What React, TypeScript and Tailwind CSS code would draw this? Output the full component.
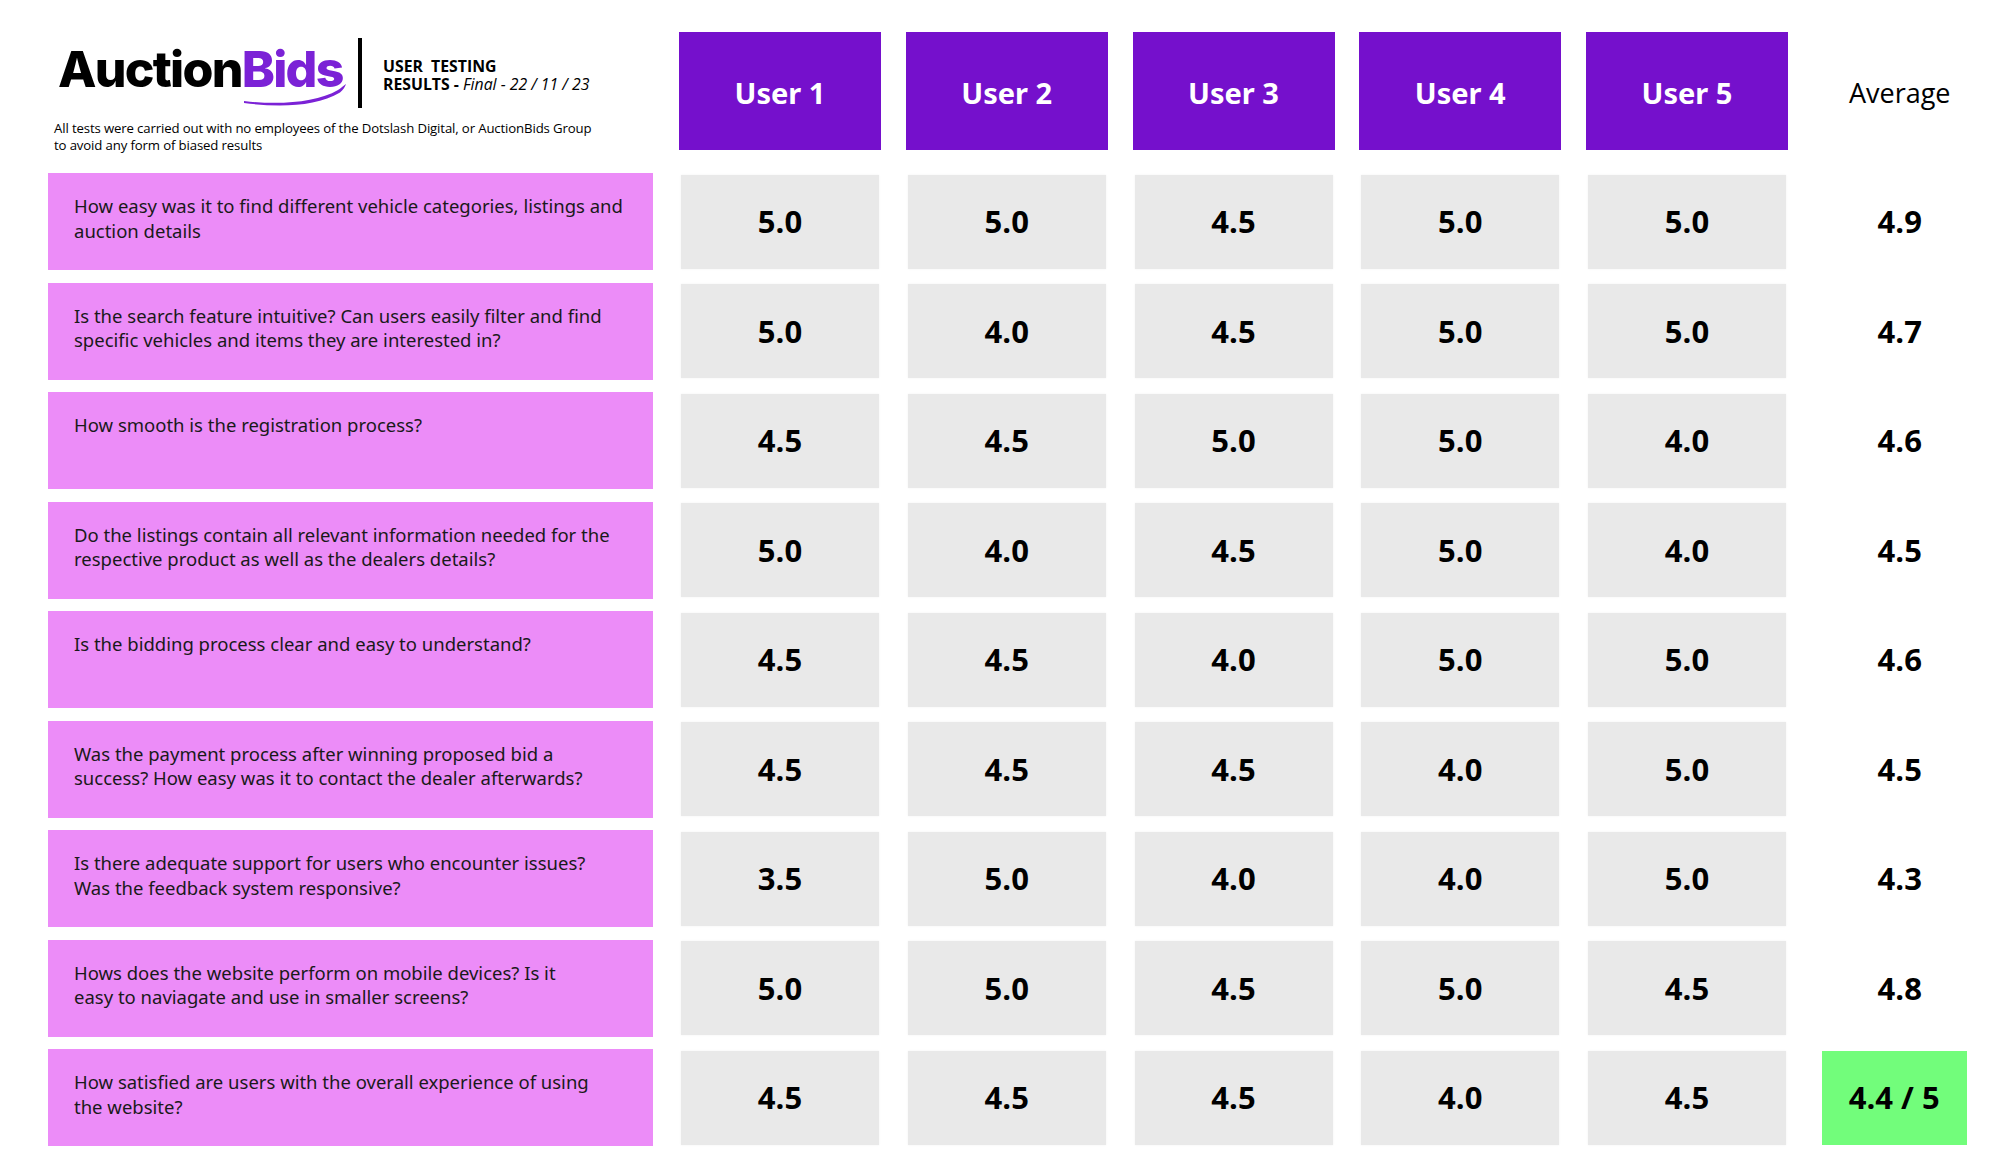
import React from "react";

type Row = { q: string[]; s: string[]; a: string; final?: boolean };

const rows: Row[] = [
  {
    q: ["How easy was it to find different vehicle categories, listings and", "auction details"],
    s: ["5.0", "5.0", "4.5", "5.0", "5.0"],
    a: "4.9",
  },
  {
    q: ["Is the search feature intuitive? Can users easily filter and find", "specific vehicles and items they are interested in?"],
    s: ["5.0", "4.0", "4.5", "5.0", "5.0"],
    a: "4.7",
  },
  {
    q: ["How smooth is the registration process?"],
    s: ["4.5", "4.5", "5.0", "5.0", "4.0"],
    a: "4.6",
  },
  {
    q: ["Do the listings contain all relevant information needed for the", "respective product as well as the dealers details?"],
    s: ["5.0", "4.0", "4.5", "5.0", "4.0"],
    a: "4.5",
  },
  {
    q: ["Is the bidding process clear and easy to understand?"],
    s: ["4.5", "4.5", "4.0", "5.0", "5.0"],
    a: "4.6",
  },
  {
    q: ["Was the payment process after winning proposed bid a", "success? How easy was it to contact the dealer afterwards?"],
    s: ["4.5", "4.5", "4.5", "4.0", "5.0"],
    a: "4.5",
  },
  {
    q: ["Is there adequate support for users who encounter issues?", "Was the feedback system responsive?"],
    s: ["3.5", "5.0", "4.0", "4.0", "5.0"],
    a: "4.3",
  },
  {
    q: ["Hows does the website perform on mobile devices? Is it", "easy to naviagate and use in smaller screens?"],
    s: ["5.0", "5.0", "4.5", "5.0", "4.5"],
    a: "4.8",
  },
  {
    q: ["How satisfied are users with the overall experience of using", "the website?"],
    s: ["4.5", "4.5", "4.5", "4.0", "4.5"],
    a: "4.4 / 5",
    final: true,
  },
];

function Logo() {
  return (
    <div className="relative ml-[10px] mt-[12px] w-[290px] shrink-0">
      <div className="font-['Inter',sans-serif] text-[50px] font-extrabold leading-none tracking-[-0.035em] text-black whitespace-nowrap">
        Auction<span className="text-[#7B22D6]">Bids</span>
      </div>
      <svg
        className="absolute left-0 top-0 overflow-visible"
        width="290"
        height="64"
        viewBox="0 0 290 64"
      >
        <path
          d="M186 57 C 220 61, 258 59, 280 46 C 283 44, 286 41.5, 288 40 C 287 43, 285 46, 282 48.5 C 258 63, 220 63.5, 186 59 Z"
          fill="#7B22D6"
        />
      </svg>
    </div>
  );
}

function HeaderBlock() {
  return (
    <div className="flex flex-col">
      <div className="flex items-start">
        <Logo />
        <div className="ml-[10px] mt-[6px] h-[70px] w-[4px] shrink-0 bg-black" />
        <div className="ml-[21px] mt-[24.5px] font-['Open_Sans',sans-serif] text-[15.8px] leading-[18.6px] text-black whitespace-nowrap">
          <div className="font-bold">USER&nbsp; TESTING</div>
          <div>
            <span className="font-bold">RESULTS - </span>
            <span className="italic">Final - 22 / 11 / 23</span>
          </div>
        </div>
      </div>
      <div className="ml-[6px] mt-[12px] font-['Open_Sans',sans-serif] text-[13.2px] leading-[16.5px] tracking-[-0.01em] text-black whitespace-nowrap">
        All tests were carried out with no employees of the Dotslash Digital, or AuctionBids Group
        <br />
        to avoid any form of biased results
      </div>
    </div>
  );
}

export default function App() {
  return (
    <div className="h-[1176px] w-[2015px] overflow-hidden bg-white pl-[48px] pt-[32px] text-black">
      <div className="grid grid-cols-[606.25px_repeat(5,202px)_174px] grid-rows-[128.5px_repeat(9,97px)] gap-x-[24.75px] gap-y-[12.5px]">
        <HeaderBlock />
        {[1, 2, 3, 4, 5].map((n) => (
          <div
            key={n}
            className="flex h-[118px] items-center justify-center bg-[#7510CC] pt-[3px] font-['Noto_Sans',sans-serif] text-[29px] font-bold font-stretch-semi-condensed text-white"
          >
            User {n}
          </div>
        ))}
        <div className="flex h-[118px] items-center justify-center pt-[5px] font-['Open_Sans',sans-serif] text-[27px] text-black">
          Average
        </div>

        {rows.map((r, i) => (
          <React.Fragment key={i}>
            <div className="h-[97px] w-[605px] bg-[#EC8CF8] pl-[26px] pt-[21px] font-['Noto_Sans',sans-serif] text-[18.5px] leading-[24.5px] font-stretch-semi-condensed text-[#1a1a1a] whitespace-nowrap">
              {r.q.map((line, j) => (
                <div key={j}>{line}</div>
              ))}
            </div>
            {r.s.map((v, j) => (
              <div
                key={j}
                className="mx-[2px] my-[1.5px] flex items-center justify-center bg-[#E9E9E9] shadow-[0_0_2px_rgba(0,0,0,0.06)] font-['Open_Sans',sans-serif] text-[31px] font-bold text-black"
              >
                {v}
              </div>
            ))}
            {r.final ? (
              <div className="my-[1.5px] ml-[9px] flex w-[145px] items-center justify-center bg-[#72FD7B] font-['Open_Sans',sans-serif] text-[31px] font-bold text-black whitespace-nowrap">
                {r.a}
              </div>
            ) : (
              <div className="flex items-center justify-center font-['Open_Sans',sans-serif] text-[31px] font-bold text-black">
                {r.a}
              </div>
            )}
          </React.Fragment>
        ))}
      </div>
    </div>
  );
}
